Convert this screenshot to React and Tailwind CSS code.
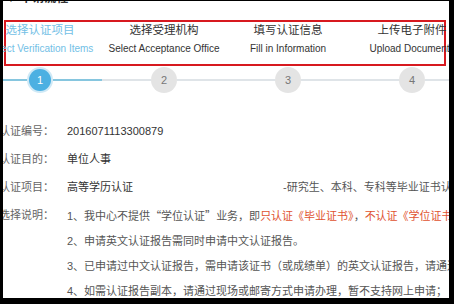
import React from 'react';

const steps = [
  { zh: '选择认证项目', en: 'Select Verification Items' },
  { zh: '选择受理机构', en: 'Select Acceptance Office' },
  { zh: '填写认证信息', en: 'Fill in Information' },
  { zh: '上传电子附件', en: 'Upload Documents' },
];

const rows = [
  { label: '认证编号：', value: '2016071113300879' },
  { label: '认证目的：', value: '单位人事' },
];

const App = () => {
  return (
    <div className="w-[454px] h-[304px] bg-black pt-[1px] pl-[3px] pr-[5px] pb-[6px] font-['Liberation_Sans','Noto_Sans_CJK_SC',sans-serif]">
      <div className="h-full bg-white overflow-hidden">
        {/* cut-off section title */}
        <div className="h-[4px] overflow-hidden">
          <div className="-mt-[9px] pl-[2px] text-[12px] leading-[12px] font-bold text-[#333] whitespace-nowrap">▼ 申请流程</div>
        </div>

        {/* step labels */}
        <div className="mt-[15px] ml-[1px] w-[442px] h-[46px] border-2 border-[#d7191f]">
          <div className="flex -ml-[28px]">
            {steps.map((s, i) => (
              <div key={i} className="w-[124px] shrink-0 flex flex-col items-center whitespace-nowrap">
                <div className={`text-[11.5px] leading-[16px] ${i === 0 ? 'text-[#72c0e6]' : 'text-[#333]'}`}>{s.zh}</div>
                <div className={`mt-[3px] text-[10px] leading-[16px] ${i === 0 ? 'text-[#72c0e6]' : 'text-[#333]'}`}>{s.en}</div>
              </div>
            ))}
          </div>
        </div>

        {/* step circles */}
        <div className="mt-[1px] flex -ml-[25px]">
          {steps.map((s, i) => (
            <div key={i} className="w-[124px] shrink-0 h-[26px] flex items-center">
              <div className={`flex-1 h-[2px] ${i === 0 ? 'bg-[#86c6df]' : 'bg-[#dfe4e8]'}`} />
              {i === 0 ? (
                <div className="w-[26px] h-[26px] rounded-full bg-[#cfe9f6] flex items-center justify-center">
                  <div className="w-[22px] h-[22px] rounded-full bg-[#4cb0e2] text-white text-[11px] flex items-center justify-center">1</div>
                </div>
              ) : (
                <div className="w-[26px] h-[26px] rounded-full bg-[#e4e4e4] text-[#777] text-[11px] flex items-center justify-center">{i + 1}</div>
              )}
              <div className={`flex-1 h-[2px] ${i === 0 ? 'bg-[#86c6df]' : 'bg-[#dfe4e8]'}`} />
            </div>
          ))}
        </div>

        {/* form info */}
        <div className="mt-[24px] -ml-[4px] text-[11px] whitespace-nowrap">
          {rows.map((r) => (
            <div key={r.label} className="flex leading-[28px]">
              <div className="w-[68px] shrink-0 text-[#666]">{r.label}</div>
              <div className="text-[#333]">{r.value}</div>
            </div>
          ))}
          <div className="flex leading-[28px]">
            <div className="w-[68px] shrink-0 text-[#666]">认证项目：</div>
            <div className="w-[216px] shrink-0 text-[#333]">高等学历认证</div>
            <div className="text-[#555]">-研究生、本科、专科等毕业证书认证</div>
          </div>
          <div className="mt-[2px] flex leading-[25px]">
            <div className="w-[68px] shrink-0 text-[#666]">选择说明：</div>
            <div className="text-[#555]">
              <div>
                1、我中心不提供<span className="font-['Noto_Sans_CJK_SC',sans-serif]">“学位认证”</span>业务，即<span className="text-[#e0522f]">只认证《毕业证书》</span>，<span className="text-[#e0522f]">不认证《学位证书》</span>。
              </div>
              <div>2、申请英文认证报告需同时申请中文认证报告。</div>
              <div>3、已申请过中文认证报告，需申请该证书（或成绩单）的英文认证报告，请通过现场或邮寄方式申请办理。</div>
              <div>4、如需认证报告副本，请通过现场或邮寄方式申请办理，暂不支持网上申请；</div>
              <div>5、如需复议，请先咨询受理机构，再通过现场或邮寄方式申请办理。</div>
            </div>
          </div>
        </div>
      </div>
    </div>
  );
};

export default App;
